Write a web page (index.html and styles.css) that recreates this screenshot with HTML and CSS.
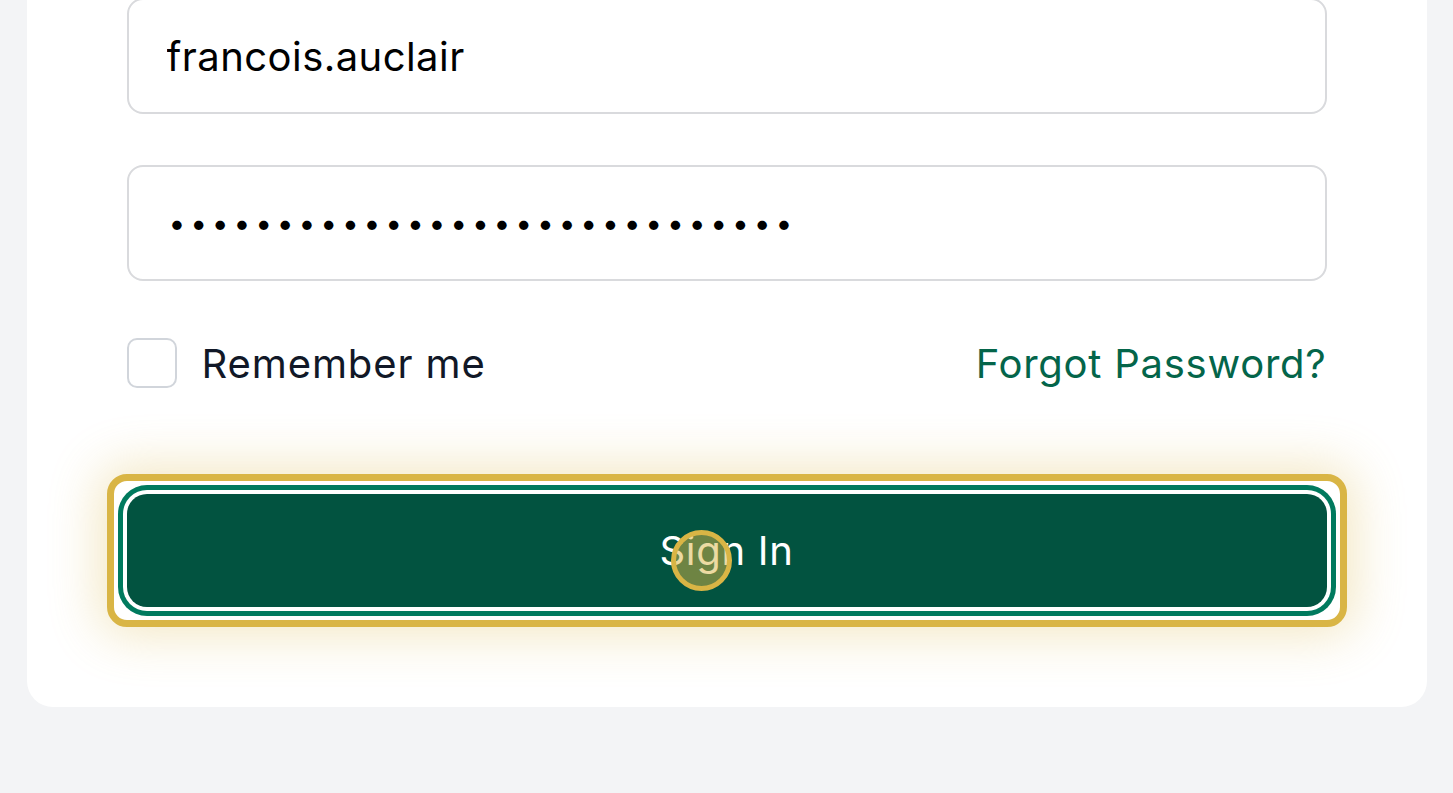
FILE: index.html
```html
<!DOCTYPE html>
<html lang="en">
<head>
    <meta charset="UTF-8">
    <meta name="viewport" content="width=device-width, initial-scale=1.0">
    <title>Sign In</title>
    <link rel="stylesheet" href="styles.css">
</head>
<body>
    <div class="card">
        <form class="login-form" onsubmit="return false">
            <input class="field field-user" type="text" id="usuario" name="usuario" value="francois.auclair">
            <input class="field field-pass" type="password" id="senha" name="senha" value="abcdefghijklmnopqrstuvwxyz123">

            <div class="options">
                <label class="remember">
                    <span class="checkbox"></span>
                    <span>Remember me</span>
                </label>
                <a href="#" class="forgot">Forgot Password?</a>
            </div>

            <div class="highlight">
                <button type="submit" class="btn-signin">Sign In</button>
                <span class="click-dot"></span>
            </div>
        </form>
    </div>
</body>
</html>
```

FILE: styles.css
```css
* {
    box-sizing: border-box;
}

html, body {
    height: 100%;
}

body {
    margin: 0;
    padding: 0 0 86px;
    background-color: #f3f4f6;
    font-family: Inter, "Noto Sans", Arial, sans-serif;
    display: flex;
    flex-direction: column;
    justify-content: flex-end;
    align-items: center;
    overflow: hidden;
}

.card {
    width: 1400px;
    flex-shrink: 0;
    background-color: #fff;
    border-radius: 0 0 26px 26px;
    padding: 40px 100px 100px;
}

.login-form {
    display: flex;
    flex-direction: column;
}

.field {
    width: 100%;
    height: 116px;
    padding: 0 38px;
    border: 2px solid #d9dadd;
    border-radius: 16px;
    font-family: inherit;
    font-size: 40px;
    letter-spacing: 0.45px;
    color: #000;
    background: #fff;
    outline: none;
}

.field-pass {
    margin-top: 51px;
    padding-left: 40px;
    font-size: 30px;
    letter-spacing: 4.8px;
}

.options {
    display: flex;
    justify-content: space-between;
    align-items: center;
    height: 60px;
    margin-top: 52px;
}

.remember {
    display: flex;
    align-items: center;
    gap: 25px;
    font-size: 40px;
    letter-spacing: 0.9px;
    color: #111827;
}

.checkbox {
    width: 50px;
    height: 50px;
    border: 2px solid #d1d5db;
    border-radius: 10px;
    background: #fff;
}

.forgot {
    font-size: 40px;
    letter-spacing: 0.75px;
    color: #04654a;
    text-decoration: none;
}

.highlight {
    position: relative;
    margin: 81px -20px -20px;
    padding: 13px;
    border: 7px solid #d9b545;
    border-radius: 20px;
    background: #fff;
    box-shadow: 0 0 50px 8px rgba(217, 181, 69, 0.32);
}

.btn-signin {
    display: block;
    width: 100%;
    height: 113px;
    border: none;
    border-radius: 20px;
    background-color: #025340;
    color: #fff;
    font-family: inherit;
    font-size: 40px;
    letter-spacing: 0.7px;
    cursor: pointer;
    box-shadow: 0 0 0 4px #fff, 0 0 0 9px #007a5e;
}

.click-dot {
    position: absolute;
    left: 557px;
    top: 49px;
    width: 61px;
    height: 61px;
    border: 5px solid #d9b545;
    border-radius: 50%;
    background: rgba(217, 181, 69, 0.5);
    pointer-events: none;
}
```
